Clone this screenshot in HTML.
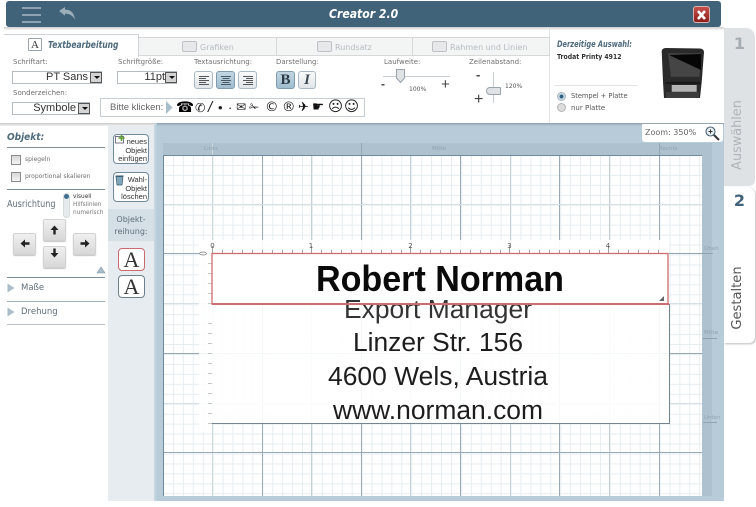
<!DOCTYPE html>
<html><head><meta charset="utf-8">
<style>
html,body{margin:0;padding:0;background:#fff}
#p{position:relative;width:756px;height:507px;overflow:hidden;background:#fff;font-family:"Liberation Sans",sans-serif;color:#555}
#p div,#p span.a{position:absolute;white-space:nowrap;box-sizing:border-box}
.l{font-family:"DejaVu Sans",sans-serif;font-size:7px;color:#6f6f6f;line-height:9px}
.sel{background:#fff;border:1px solid #b5bcc2;height:13px;font-size:11px;line-height:11px;color:#333;text-align:right}
.dd{width:12px;height:11px;background:#d4d4d4;border:1px solid #555;top:0;right:-1px}
.dd:after{content:"";position:absolute;left:2.5px;top:3px;border:3px solid transparent;border-top:3.5px solid #111}
.tb{height:18px;border:1px solid #a9b8c3;border-radius:3px;background:linear-gradient(#fafafa,#dfe5e9)}
.on{background:linear-gradient(#c2d6e3,#9fbdcf);border-color:#7f9bad}
.arr{width:23px;height:22px;background:linear-gradient(#f0f0f0,#d8d8d8);border:1px solid #d2d2d2;border-radius:2px;box-shadow:0 1px 1px #c4c4c4}
.hl{height:1px;background:#7d8e9a}
.cb{width:10px;height:10px;border:1px solid #8c8c8c;background:linear-gradient(#d8d8d8,#f4f4f4)}
.bt{width:36px;border:1px solid #708a9b;border-radius:4px;background:#fff;font-size:7.5px;line-height:8.5px;color:#333;text-align:right;padding:3px 1px 0 0}
.ab{left:118px;width:27px;height:23px;background:#fff;border-radius:4px;font:22px/22px "Liberation Serif",serif;color:#333;text-align:center}
.tab{top:37px;height:19px;background:#f3f4f4;border:1px solid #d8d8d8;border-left:0}
.ti{top:41px;width:15px;height:11px;border:1px solid #bcc2c6;border-radius:2px;background:#e6e8e9}
</style></head><body><div id="p">

<!-- header -->
<div style="left:6px;top:1px;width:715px;height:26px;background:#41637a;border-radius:3px"></div>
<div style="left:22px;top:7px;width:19px;height:2px;background:#8ea3b1"></div>
<div style="left:22px;top:14px;width:19px;height:2px;background:#8ea3b1"></div>
<div style="left:22px;top:21px;width:19px;height:2px;background:#8ea3b1"></div>
<svg style="position:absolute;left:58px;top:6px" width="18" height="15" viewBox="0 0 18 15"><path d="M1 5 L7 1 V3.6 C12 3.6 16 6 17 13.5 C14.5 9.5 11.5 7.6 7 7.6 V9.6 Z" fill="#9aadb9"/></svg>
<div style="left:329px;top:6px;font:italic bold 12.5px/16px 'DejaVu Sans',sans-serif;color:#fff;transform:scaleX(.87);transform-origin:0 0">Creator 2.0</div>
<div style="left:693px;top:6px;width:17px;height:17px;background:linear-gradient(#c7504a,#8d1f1b);border:1px solid #d9b5b0;border-radius:3px"></div>
<svg style="position:absolute;left:693px;top:7px" width="17" height="16" viewBox="0 0 17 16"><path d="M5 4 L12 12 M12 4 L5 12" stroke="#fff" stroke-width="2.6"/></svg>

<!-- top panel -->
<div style="left:4px;top:27px;width:720px;height:3px;background:linear-gradient(#cfcfcf,#f4f4f4)"></div>
<div style="left:2px;top:30px;width:722px;height:93px;background:#fff"></div>
<div style="left:549px;top:28px;width:1px;height:95px;background:#e2e5e7"></div>

<div class="tab" style="left:139px;width:138px"></div>
<div class="tab" style="left:277px;width:136px"></div>
<div class="tab" style="left:413px;width:137px"></div>
<div style="left:4px;top:34px;width:135px;height:23px;background:#fff;border-top:1px solid #cfd4d8;border-right:1px solid #cfd4d8"></div>
<div style="left:28px;top:38px;width:14px;height:13px;border:1px solid #9aa6ae;font:11px/12px 'Liberation Serif',serif;color:#333;text-align:center;border-radius:1px">A</div>
<div style="left:47.500px;top:39px;font:italic bold 9.5px/13px 'DejaVu Sans',sans-serif;color:#4e6a7d;transform:scaleX(.8);transform-origin:0 0">Textbearbeitung</div>
<div class="ti" style="left:182px"></div><div style="left:200px;top:36px;font:8px/23px 'DejaVu Sans',sans-serif;color:#b5bcc0">Grafiken</div>
<div class="ti" style="left:317px"></div><div style="left:335px;top:36px;font:8px/23px 'DejaVu Sans',sans-serif;color:#b5bcc0">Rundsatz</div>
<div class="ti" style="left:432px"></div><div style="left:450px;top:36px;font:8px/23px 'DejaVu Sans',sans-serif;color:#b5bcc0">Rahmen und Linien</div>

<div class="l" style="left:13px;top:58px">Schriftart:</div>
<div class="sel" style="left:12px;top:71px;width:90px;padding-right:13px">PT Sans<span class="a dd"></span></div>
<div class="l" style="left:118px;top:58px">Schriftgröße:</div>
<div class="sel" style="left:117px;top:71px;width:60px;padding-right:11px">11pt<span class="a dd"></span></div>
<div class="l" style="left:194px;top:58px">Textausrichtung:</div>
<div class="tb" style="left:194px;top:71px;width:19px"></div>
<div class="tb on" style="left:216px;top:71px;width:19px"></div>
<div class="tb" style="left:238px;top:71px;width:19px"></div>
<svg style="position:absolute;left:194px;top:71px" width="64" height="18"><path d="M5 5.500H15M5 7.500H12M5 9.500H15M5 11.500H12M5 13.500H15" stroke="#555" stroke-width=".9"/><path d="M27 5.500H37M28.500 7.500H35.500M27 9.500H37M28.500 11.500H35.500M27 13.500H37" stroke="#4a5a65" stroke-width=".9"/><path d="M49 5.500H59M52 7.500H59M49 9.500H59M52 11.500H59M49 13.500H59" stroke="#555" stroke-width=".9"/></svg>
<div class="l" style="left:276px;top:58px">Darstellung:</div>
<div class="tb on" style="left:276px;top:71px;width:19px;text-align:center;font:bold 15px/17px 'Liberation Serif',serif;color:#2c3a44">B</div>
<div class="tb" style="left:298px;top:71px;width:18px;text-align:center;font:italic bold 15px/17px 'Liberation Serif',serif;color:#3c4a54">I</div>

<div class="l" style="left:13px;top:89px">Sonderzeichen:</div>
<div class="sel" style="left:12px;top:102px;width:78px;padding-right:13px">Symbole<span class="a dd"></span></div>
<div style="left:100px;top:98px;width:265px;height:19px;border:1px solid #c5ced4"></div>
<div style="left:110px;top:101px;font-size:9.5px;line-height:13px;color:#666">Bitte klicken:</div>
<svg style="position:absolute;left:166px;top:100px" width="8" height="16"><path d="M0 1 L6.500 7.500 L0 14Z" fill="#a9bdcb"/></svg>
<div style="left:176px;top:99px;font:14.500px/18px 'DejaVu Sans',sans-serif;color:#000">☎</div>
<div style="left:195px;top:100px;font:italic 12.500px/16px 'DejaVu Sans',serif;color:#222">✆</div>
<div style="left:208px;top:100px;font:italic 15px/15px 'Liberation Sans',sans-serif;color:#222">/</div>
<div style="left:218px;top:100px;font:13px/15px 'Liberation Sans',sans-serif;color:#222">•</div>
<div style="left:228px;top:100px;font:13px/15px 'Liberation Sans',sans-serif;color:#222">·</div>
<div style="left:236px;top:100px;font:12px/15px 'DejaVu Sans',sans-serif;color:#222">✉</div>
<div style="left:249px;top:100px;font:12px/15px 'DejaVu Sans',sans-serif;color:#222">✁</div>
<div style="left:265px;top:100px;font:13.500px/15px 'DejaVu Sans',sans-serif;color:#222">©</div>
<div style="left:282px;top:100px;font:13.500px/15px 'DejaVu Sans',sans-serif;color:#222">®</div>
<div style="left:298px;top:100px;font:13px/15px 'DejaVu Sans',sans-serif;color:#111">✈</div>
<div style="left:312px;top:100px;font:13.500px/15px 'DejaVu Sans',sans-serif;color:#111">☛</div>
<div style="left:328px;top:100px;font:14.500px/15px 'DejaVu Sans',sans-serif;color:#222">☹</div>
<div style="left:344px;top:100px;font:14.500px/15px 'DejaVu Sans',sans-serif;color:#222">☺</div>

<div class="l" style="left:384px;top:58px">Laufweite:</div>
<div style="left:383px;top:76px;width:67px;height:1px;background:#c8ced2"></div>
<svg style="position:absolute;left:395px;top:68px" width="12" height="16"><path d="M1.500 1.500H9.500V10L5.500 14.500L1.500 10Z" fill="#dfe3e6" stroke="#98a3ab"/></svg>
<div style="left:381px;top:78px;font:bold 12px/13px 'Liberation Sans',sans-serif;color:#444">-</div>
<div style="left:441px;top:77px;font:15px/15px 'Liberation Sans',sans-serif;color:#444">+</div>
<div style="left:409px;top:85px;font:6px/9px 'DejaVu Sans',sans-serif;color:#555">100%</div>
<div class="l" style="left:469px;top:58px">Zeilenabstand:</div>
<div style="left:493px;top:72px;width:1px;height:31px;background:#c8ced2"></div>
<div style="left:486px;top:87px;width:15px;height:8px;background:#dfe3e6;border:1px solid #98a3ab;border-radius:4px 1px 1px 4px"></div>
<div style="left:476px;top:68px;font:bold 13px/14px 'Liberation Sans',sans-serif;color:#444">-</div>
<div style="left:474px;top:92px;font:16px/16px 'Liberation Sans',sans-serif;color:#444">+</div>
<div style="left:505px;top:82px;font:6px/9px 'DejaVu Sans',sans-serif;color:#555">120%</div>

<!-- right info -->
<div style="left:557px;top:40px;font:italic bold 8.5px/11px 'DejaVu Sans',sans-serif;color:#4e6a7d;transform:scaleX(.78);transform-origin:0 0">Derzeitige Auswahl:</div>
<div style="left:557px;top:51px;font:bold 7.4px/11px 'DejaVu Sans',sans-serif;color:#333;transform:scaleX(.83);transform-origin:0 0">Trodat Printy 4912</div>
<div style="left:554px;top:85px;width:84px;height:1px;background:#e0e4e7"></div>
<div style="left:557px;top:92px;width:9px;height:9px;border-radius:50%;background:radial-gradient(circle,#2e6285 35%,#cfdbe3 45%);border:1px solid #a6b4bd"></div>
<div style="left:557px;top:103px;width:9px;height:9px;border-radius:50%;background:#dcdcdc;border:1px solid #b4b4b4"></div>
<div style="left:571px;top:91px;font:7px/11px 'DejaVu Sans',sans-serif;color:#555;transform:scaleX(.95);transform-origin:0 0">Stempel + Platte</div>
<div style="left:571px;top:103px;font:7px/11px 'DejaVu Sans',sans-serif;color:#555">nur Platte</div>
<svg style="position:absolute;left:658px;top:44px" width="48" height="58" viewBox="0 0 48 58">
<path d="M6 54 L5 38 L3.700 7 Q4 4.300 8 4 L42 4.500 Q46 5 46 8 L43.700 38 L42 54 Z" fill="#2a2a2a"/>
<path d="M10 9.300 H43 L41.500 32.700 H13 Z" fill="#454545"/>
<path d="M11 11 L43 26 L43 10 Z" fill="#060606"/>
<path d="M7 38 H43 L42 40 H8Z" fill="#191919"/>
<path d="M13.700 41 H38.700 V47.700 H13.700Z" fill="#b5b5b5"/>
<path d="M8 48 H41 V54 H8Z" fill="#3c3c3c"/>
</svg>

<!-- right tabs -->
<div style="left:724px;top:28px;width:31px;height:158px;background:#dfe2e4;border-radius:0 9px 6px 0"></div>
<div style="left:724px;top:28px;width:31px;height:40px;text-align:center;font:bold 16px/32px 'DejaVu Sans',sans-serif;color:#a6adb2">1</div>
<div style="left:737px;top:135px;font:13.5px/14px 'DejaVu Sans',sans-serif;color:#aeb4b8;transform:translate(-50%,-50%) rotate(-90deg) scaleX(.95)">Auswählen</div>
<div style="left:724px;top:187px;width:31px;height:156px;background:#fff;border-radius:0 8px 6px 0;box-shadow:1px 1px 2px #bbb"></div>
<div style="left:724px;top:187px;width:31px;height:30px;text-align:center;font:bold 16px/28px 'DejaVu Sans',sans-serif;color:#41637a">2</div>
<div style="left:737px;top:298px;font:13.5px/14px 'DejaVu Sans',sans-serif;color:#555;transform:translate(-50%,-50%) rotate(-90deg) scaleX(.97)">Gestalten</div>

<!-- left sidebar -->
<div style="left:0;top:123px;width:108px;height:378px;background:#fff"></div>
<div style="left:108px;top:123px;width:46px;height:378px;background:#e6ecf0"></div>
<div style="left:0;top:123px;width:154px;height:3px;background:linear-gradient(#c9c9c9,#f2f2f2)"></div>
<div style="left:7px;top:131px;font:italic bold 10px/13px 'DejaVu Sans',sans-serif;color:#4e6a7d;transform:scaleX(.9);transform-origin:0 0">Objekt:</div>
<div class="hl" style="left:7px;top:147px;width:98px"></div>
<div class="cb" style="left:11px;top:155px"></div>
<div class="l" style="left:25px;top:155px;font-size:6px">spiegeln</div>
<div class="cb" style="left:11px;top:172px"></div>
<div class="l" style="left:25px;top:172px;font-size:6px">proportional skalieren</div>
<div class="hl" style="left:7px;top:189px;width:98px"></div>
<div style="left:7px;top:199px;font:9.5px/12px 'DejaVu Sans',sans-serif;color:#5f6f7a;transform:scaleX(.85);transform-origin:0 0">Ausrichtung</div>
<div style="left:63px;top:193px;width:7px;height:25px;background:#e6eaed;border-radius:4px;border:1px solid #d5dadd"></div>
<div style="left:64px;top:194px;width:5px;height:5px;background:#41708f;border-radius:50%"></div>
<div style="left:73px;top:193px;font:5.8px/8.5px 'DejaVu Sans',sans-serif;color:#333">visuell</div>
<div style="left:73px;top:201px;font:5.8px/8.5px 'DejaVu Sans',sans-serif;color:#777">Hilfslinien</div>
<div style="left:73px;top:209px;font:5.8px/8.5px 'DejaVu Sans',sans-serif;color:#777">numerisch</div>
<div class="arr" style="left:43px;top:219px"></div>
<div class="arr" style="left:13px;top:233px"></div>
<div class="arr" style="left:73px;top:233px"></div>
<div class="arr" style="left:43px;top:246px"></div>
<svg style="position:absolute;left:0;top:210px" width="108" height="70">
<path d="M54.500 15.500L50.500 20H53.300V24.500H55.700V20H58.500Z" fill="#222"/>
<path d="M54.500 47.500L50.500 43H53.300V38.500H55.700V43H58.500Z" fill="#222"/>
<path d="M20.500 33.500L25 29.500V32.300H29.500V34.700H25V37.500Z" fill="#222"/>
<path d="M89.500 33.500L85 29.500V32.300H80.500V34.700H85V37.500Z" fill="#222"/>
<path d="M97 63L101 57L105 63Z" fill="#a9bdcb" stroke="#7f97a7" stroke-width=".6"/>
</svg>
<div class="hl" style="left:7px;top:277px;width:98px"></div>
<svg style="position:absolute;left:7px;top:283px" width="9" height="36"><path d="M0.500 0.500L7.500 5L0.500 9.500Z" fill="#a9bdcb"/><path d="M0.500 24.500L7.500 29L0.500 33.500Z" fill="#a9bdcb"/></svg>
<div style="left:21px;top:282px;font:8.5px/12px 'DejaVu Sans',sans-serif;color:#5f6f7a">Maße</div>
<div class="hl" style="left:7px;top:301px;width:98px;background:#9fadb6"></div>
<div style="left:21px;top:306px;font:8.5px/12px 'DejaVu Sans',sans-serif;color:#5f6f7a">Drehung</div>
<div class="hl" style="left:7px;top:324px;width:98px;background:#b8c2c9"></div>

<div class="bt" style="left:113px;top:134px;height:30px">neues<br>Objekt<br>einfügen</div>
<svg style="position:absolute;left:115px;top:135px" width="11" height="9"><rect x=".5" y="1.5" width="8" height="6.5" fill="#fff" stroke="#778"/><path d="M6.500 0V6M3.500 3H9.500" stroke="#5aa02c" stroke-width="1.600"/></svg>
<div class="bt" style="left:113px;top:172px;height:30px">Wahl-<br>Objekt<br>löschen</div>
<svg style="position:absolute;left:115px;top:174px" width="9" height="12"><path d="M1 2.500H8L7 11H2Z" fill="#7ea7bb" stroke="#36566a" stroke-width=".7"/><path d="M.5 2H8.500" stroke="#36566a"/></svg>
<div style="left:108px;top:209px;width:46px;height:32px;background:#d4dfe6;text-align:center;font:8px/11.5px 'DejaVu Sans',sans-serif;color:#5f6f7a;padding-top:5px;white-space:normal">Objekt-<br>reihung:</div>
<div class="ab" style="top:248px;border:1px solid #c96a6e">A</div>
<div class="ab" style="top:275px;border:1px solid #6c8090">A</div>

<!-- canvas -->
<div style="left:154px;top:123px;width:570px;height:378px;background:#b7cbd9"></div>
<div style="left:154px;top:123px;width:570px;height:3px;background:linear-gradient(#8ea0ad,#b7cbd9)"></div>
<div style="left:154px;top:123px;width:3px;height:378px;background:linear-gradient(90deg,#cfdbe3,#b7cbd9)"></div>
<svg style="position:absolute;left:154px;top:123px" width="570" height="384" viewBox="154 123 570 384">
<defs>
<pattern id="g" x="163" y="155" width="9.93" height="9.95" patternUnits="userSpaceOnUse"><path d="M.5 0V9.950M0 .5H9.930" stroke="#e6edf1" stroke-width="1" fill="none"/></pattern>
</defs>
<rect x="163" y="143" width="549" height="12" fill="#adc1ce"/>
<rect x="702" y="155" width="10" height="341" fill="#adc1ce"/>
<rect x="163" y="155" width="539" height="341" fill="#fff"/>
<rect x="163" y="155" width="539" height="341" fill="url(#g)"/>
<g stroke-width="1">
<path d="M311.500 155V496M410.500 155V496M510.500 155V496M609.500 155V496" stroke="#c5d1d9"/>
<path d="M212.500 143V496" stroke="#cdd8df"/>
<path d="M262.500 155V496M361.500 155V496M460.500 155V496M559.500 155V496M659.500 155V496" stroke="#9aabb6"/>
<path d="M163 204.500H702M163 303.500H702M163 403.500H702" stroke="#d6e0e6"/>
<path d="M163 253.500H702M163 353.500H702M163 452.500H702" stroke="#97a9b4"/>
<path d="M163.500 155V496M163 155.500H702" stroke="#6f8a9c"/>
</g>
<path d="M361.500 143V155M659.500 143V155" stroke="#93a8b5"/>
<g font-family="DejaVu Sans,sans-serif" font-size="5.5" fill="#8fa3b0">
<text x="204" y="150">Links</text><text x="432" y="150">Mitte</text><text x="659" y="150">Rechts</text>
<text x="704" y="250">Oben</text><text x="704" y="334">Mitte</text><text x="704" y="419">Unten</text>
</g>
<path d="M703 338.500H717M703 422.500H717M669 253.500H713" stroke="#8fa2ae"/>
<!-- white product area -->
<rect x="199" y="240" width="470" height="13" fill="#fff" opacity=".92"/>
<rect x="199" y="253" width="13" height="179" fill="#fff" opacity=".88"/>
<rect x="212" y="253" width="457" height="170" fill="#fff" opacity=".9"/>
<path d="M212 423.500H669.500V304" stroke="#75858f" fill="none"/>
<!-- ruler -->
<g stroke="#8a8a8a" stroke-width=".8">
<path d="M212.500 246V253M311.500 246V253M410.500 246V253M509.500 246V253M608.500 246V253"/>
<path d="M222.500 250V253M232.500 250V253M242.500 250V253M252.500 250V253M262.500 250V253M272.500 250V253M282.500 250V253M292.500 250V253M302.500 250V253M321.500 250V253M331.500 250V253M341.500 250V253M351.500 250V253M361.500 250V253M371.500 250V253M381.500 250V253M391.500 250V253M401.500 250V253M420.500 250V253M430.500 250V253M440.500 250V253M450.500 250V253M460.500 250V253M470.500 250V253M480.500 250V253M490.500 250V253M500.500 250V253M519.500 250V253M529.500 250V253M539.500 250V253M549.500 250V253M559.500 250V253M569.500 250V253M579.500 250V253M589.500 250V253M599.500 250V253M618.500 250V253M628.500 250V253M638.500 250V253M648.500 250V253M658.500 250V253"/>
<path d="M208 263.500H212M208 273.500H212M208 283.500H212M208 293.500H212M208 303.500H212M208 323.500H212M208 333.500H212M208 343.500H212M208 353.500H212M208 363.500H212M208 373.500H212M208 383.500H212M208 393.500H212M208 403.500H212M208 413.500H212M208 423.500H212" stroke="#b5b5b5"/>
</g>
<ellipse cx="203" cy="253.500" rx="3.500" ry="1.500" fill="#fff" stroke="#777" stroke-width=".7"/>
<g font-family="DejaVu Sans,sans-serif" font-size="7" fill="#555" text-anchor="middle">
<text x="212.500" y="248">0</text><text x="311" y="248">1</text><text x="410.500" y="248">2</text><text x="509.500" y="248">3</text><text x="608" y="248">4</text>
</g>
<!-- red box -->
<rect x="212" y="253.500" width="456" height="50.500" fill="#fff" stroke="#cc6d70" stroke-width="1.300"/>
<path d="M659 301L664 296V301Z" fill="#666"/>
<!-- texts -->
<text x="316" y="291" font-family="Liberation Sans,sans-serif" font-weight="bold" font-size="36" fill="#0a0a0a" textLength="248" lengthAdjust="spacingAndGlyphs">Robert Norman</text>
<g font-family="Liberation Sans,sans-serif" font-size="25.500" fill="#1d1d1d">
<text x="344" y="318" textLength="188" lengthAdjust="spacingAndGlyphs" fill="#333">Export Manager</text>
<text x="353" y="351" textLength="170" lengthAdjust="spacingAndGlyphs">Linzer Str. 156</text>
<text x="328" y="385" textLength="220" lengthAdjust="spacingAndGlyphs">4600 Wels, Austria</text>
<text x="333" y="419" textLength="210" lengthAdjust="spacingAndGlyphs">www.norman.com</text>
</g>
</svg>
<div style="left:212px;top:303px;width:457px;height:1.500px;background:#cc6d70"></div>

<!-- zoom -->
<div style="left:642px;top:124px;width:81px;height:18px;background:#fff;border-radius:0 0 3px 3px"></div>
<div style="left:645px;top:127px;font:8px/11px 'DejaVu Sans',sans-serif;color:#666">Zoom: 350%</div>
<svg style="position:absolute;left:704px;top:125px" width="16" height="16"><circle cx="6.500" cy="6.500" r="4.500" fill="#e6eef2" stroke="#4d6272" stroke-width="1.100"/><path d="M10 10L15 15" stroke="#333" stroke-width="2"/><path d="M4.500 6.500H8.500M6.500 4.500V8.500" stroke="#333"/></svg>

<!-- bottom -->
<div style="left:0;top:501px;width:756px;height:6px;background:#fff"></div>
</div></body></html>
